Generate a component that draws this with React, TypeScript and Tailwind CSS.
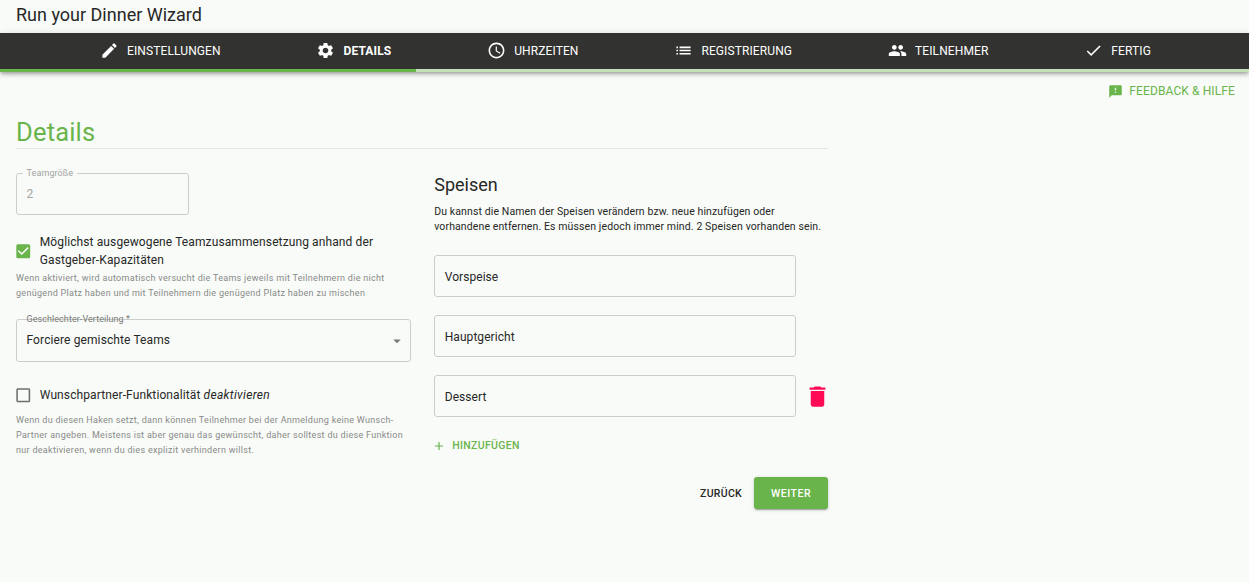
import type { ReactNode } from "react";
import type { IconType } from "react-icons";
import {
  MdAccessTime,
  MdAdd,
  MdArrowDropDown,
  MdCheck,
  MdCheckBox,
  MdCheckBoxOutlineBlank,
  MdDelete,
  MdEdit,
  MdFeedback,
  MdList,
  MdPeople,
  MdSettings,
} from "react-icons/md";

const steps: { label: string; icon: IconType; active?: boolean }[] = [
  { label: "EINSTELLUNGEN", icon: MdEdit },
  { label: "DETAILS", icon: MdSettings, active: true },
  { label: "UHRZEITEN", icon: MdAccessTime },
  { label: "REGISTRIERUNG", icon: MdList },
  { label: "TEILNEHMER", icon: MdPeople },
  { label: "FERTIG", icon: MdCheck },
];

const meals = ["Vorspeise", "Hauptgericht", "Dessert"];

function Caption({ children, className }: { children: ReactNode; className: string }) {
  return (
    <p className={`text-[9px] leading-[15px] tracking-[0.3px] text-[#888a88] ${className}`}>
      {children}
    </p>
  );
}

function StepBar() {
  return (
    <nav className="h-[39px] bg-[#323230] shadow-[0_2px_3px_-1px_rgba(0,0,0,0.2),0_3px_4px_0_rgba(0,0,0,0.14),0_1px_8px_0_rgba(0,0,0,0.12)]">
      <ul className="flex h-9 items-center justify-between pr-[98px] pl-[99.5px] text-[12px] text-white">
        {steps.map(({ label, icon: Icon, active }) => (
          <li key={label} className="flex items-center gap-[8.5px]">
            <Icon className="mb-px size-[19px]" />
            <span className={active ? "font-bold tracking-[0.11px]" : "tracking-[0.11px]"}>{label}</span>
          </li>
        ))}
      </ul>
      <div className="h-[3px] bg-[#c5e1b8]">
        <div className="h-full w-1/3 bg-[#69b44b]" />
      </div>
    </nav>
  );
}

export default function App() {
  return (
    <div className="min-h-screen bg-[#f9fbf8] font-['Roboto',sans-serif] text-[#262726]">
      <header className="flex h-[33px] items-center px-4 pb-[5px] text-[18px]">
        <h1>Run your Dinner Wizard</h1>
      </header>
      <StepBar />

      <div className="flex h-[38px] items-center justify-end gap-[6px] pr-[14px] text-[12px] tracking-[0.11px] text-[#69b44b]">
        <MdFeedback className="size-[15px]" />
        <a>FEEDBACK &amp; HILFE</a>
      </div>

      <main className="ml-4 w-[812px]">
        <h2 className="h-[39px] border-b border-[#e4e6e3] pt-[6px] text-[25.5px] leading-[32px] tracking-[0.19px] text-[#69b44b]">
          Details
        </h2>

        <div className="flex gap-[23.75px]">
          <section className="w-[394.5px] shrink-0">
            <div className="relative mt-6 flex h-[42px] w-[172.5px] items-center rounded-[3px] border border-[#cccecb] px-[9.5px] text-[12px] text-[#a2a3a2]">
              <span className="absolute -top-[7px] left-[5.5px] bg-[#f9fbf8] px-1 text-[9px] leading-[13px] tracking-[0.1px]">
                Teamgröße
              </span>
              2
            </div>

            <label className="mt-[18px] flex items-center gap-[7.25px] text-[12px] leading-[18px] tracking-[0.11px]">
              <MdCheckBox className="-ml-[2px] size-[18.5px] shrink-0 text-[#69b44b]" />
              <span>
                Möglichst ausgewogene Teamzusammensetzung anhand der
                <br />
                Gastgeber-Kapazitäten
              </span>
            </label>
            <Caption className="mt-[2px]">
              Wenn aktiviert, wird automatisch versucht die Teams jeweils mit Teilnehmern die nicht
              <br />
              genügend Platz haben und mit Teilnehmern die genügend Platz haben zu mischen
            </Caption>

            <div className="relative mt-[18px] flex h-[43px] items-center justify-between rounded-[3px] border border-[#cccecb] pr-[4px] pb-[2px] pl-[9.5px] text-[12px] tracking-[0.11px]">
              <span className="absolute -top-[7px] left-[9.5px] text-[9px] leading-[13px] tracking-[0.06px] text-[#777977]">
                Geschlechter-Verteilung *
              </span>
              Forciere gemischte Teams
              <MdArrowDropDown className="mt-[2px] size-[18px] text-[#777977]" />
            </div>

            <label className="mt-6 flex items-center gap-[7.25px] text-[12px] leading-[18px] tracking-[0.11px]">
              <MdCheckBoxOutlineBlank className="-ml-[2px] size-[18.5px] shrink-0 text-[#6d6f6d]" />
              <span>
                Wunschpartner-Funktionalität <em className="tracking-[0.32px]">deaktivieren</em>
              </span>
            </label>
            <Caption className="mt-[8.5px]">
              Wenn du diesen Haken setzt, dann können Teilnehmer bei der Anmeldung keine Wunsch-
              <br />
              Partner angeben. Meistens ist aber genau das gewünscht, daher solltest du diese Funktion
              <br />
              nur deaktivieren, wenn du dies explizit verhindern willst.
            </Caption>
          </section>

          <section className="min-w-0 flex-1">
            <h3 className="mt-6 text-[18px] leading-6">Speisen</h3>
            <p className="mt-[7px] text-[10.5px] leading-[15px] tracking-[0.11px] whitespace-nowrap">
              Du kannst die Namen der Speisen verändern bzw. neue hinzufügen oder
              <br />
              vorhandene entfernen. Es müssen jedoch immer mind. 2 Speisen vorhanden sein.
            </p>

            <ul className="mt-[21px] flex flex-col gap-[18px]">
              {meals.map((meal, index) => (
                <li key={meal} className="flex items-center">
                  <div className="flex h-[42px] w-[362px] shrink-0 items-center rounded-[3px] border border-[#cccecb] px-[9.5px] pt-px text-[12px] tracking-[0.05px]">
                    {meal}
                  </div>
                  {index === 2 && (
                    <MdDelete className="mt-px ml-[8px] size-[27px] shrink-0 text-[#ff0a54]" />
                  )}
                </li>
              ))}
            </ul>

            <button className="mt-[20px] flex h-[18px] items-center gap-[6px] text-[10.5px] font-medium tracking-[0.32px] text-[#69b44b]">
              <MdAdd className="-ml-[2px] size-[14px]" />
              HINZUFÜGEN
            </button>
          </section>
        </div>

        <div className="mt-[19px] flex items-center justify-end gap-3 text-[10.5px] font-medium tracking-[0.3px]">
          <button className="pt-px">ZURÜCK</button>
          <button className="h-8 w-[74px] rounded-[3px] bg-[#69b44b] pt-px tracking-[0.55px] text-white shadow-[0_2px_1px_-1px_rgba(0,0,0,0.2),0_1px_2px_0_rgba(0,0,0,0.14),0_1px_4px_0_rgba(0,0,0,0.12)]">
            WEITER
          </button>
        </div>
      </main>
    </div>
  );
}
